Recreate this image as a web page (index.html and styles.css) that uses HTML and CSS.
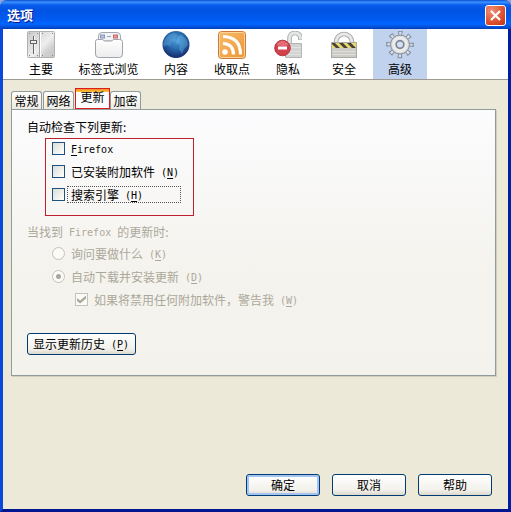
FILE: index.html
```
<!DOCTYPE html>
<html lang="zh-CN">

<head>
	<meta charset="utf-8">
	<title>选项</title>
	<link rel="stylesheet" href="styles.css">
</head>

<body>
	<div class="window">
		<header class="titlebar">
			<h1>选项</h1>
			<button class="close" type="button" aria-label="关闭">
				<svg width="13" height="13" viewBox="0 0 13 13"><path d="M2 2l9 9M11 2l-9 9" stroke="#fff" stroke-width="2.2" fill="none"/></svg>
			</button>
		</header>

		<nav class="toolbar">
			<button class="tool" type="button">
				<svg viewBox="0 0 28 28">
					<defs><linearGradient id="metal" x1="0" y1="0" x2="1" y2="1"><stop offset="0" stop-color="#c8c8c8"/><stop offset=".55" stop-color="#eeeeee"/><stop offset=".75" stop-color="#d0d0d0"/><stop offset="1" stop-color="#c4c4c4"/></linearGradient></defs>
					<rect x=".5" y=".5" width="27" height="26" rx="1" fill="url(#metal)" stroke="#b2b2b2"/>
					<path d="M12.5 1v25" stroke="#a5a5a5"/><path d="M13.5 1v25" stroke="#fff"/>
					<path d="M6.500 5v18" stroke="#666"/><path d="M7.500 5v18" stroke="#f4f4f4"/>
					<rect x="3.500" y="9.500" width="6" height="3" fill="#eee" stroke="#666"/>
					<path d="M2 2.500h1M10 2.500h1M2 24.500h1M10 24.500h1M15 2.500h1M25 2.500h1M15 24.500h1M25 24.500h1" stroke="#888"/>
				</svg>
				<span>主要</span>
			</button>
			<button class="tool tool-wide" type="button">
				<svg viewBox="0 0 28 28">
					<defs><linearGradient id="paper" x1="0" y1="0" x2="0" y2="1"><stop offset="0" stop-color="#fff"/><stop offset="1" stop-color="#ececee"/></linearGradient></defs>
					<path d="M3.500 10V5q0-3.500 3.500-3.500h15q3.500 0 3.500 3.500v5z" fill="#f1f3f6" stroke="#a3a8b0"/>
					<path d="M5 5.500h5" stroke="#8797b5" stroke-width="4"/><path d="M6 5.500h3" stroke="#b5c4de" stroke-width="2"/>
					<path d="M12 5.500h4" stroke="#a0a7b3"/>
					<path d="M18 5.500h5" stroke="#c9696b" stroke-width="4"/><path d="M19 5.500h3" stroke="#e59a9a" stroke-width="2"/>
					<path d="M.500 10.500q0-2 2-2h5l2 1.500h7l2-1.500h6q3 0 3 2V23q0 3.500-3 3.500H3.500Q.5 26.500.5 23z" fill="url(#paper)" stroke="#a0a4ac"/>
				</svg>
				<span>标签式浏览</span>
			</button>
			<button class="tool" type="button">
				<svg viewBox="0 0 28 28">
					<defs><radialGradient id="sea" cx=".5" cy=".35" r=".65"><stop offset="0" stop-color="#4b9cda"/><stop offset=".5" stop-color="#2869ae"/><stop offset="1" stop-color="#142a68"/></radialGradient></defs>
					<circle cx="14" cy="13.500" r="13.500" fill="url(#sea)"/>
					<path d="M3 8Q7 2 12 2l4 2-3 3 1 3-4 1-2 4-3-1-3 2-1-3z" fill="#62a8dc" opacity=".45"/>
					<path d="M16 5l4-1 5 5 1 5-4 4-2 5-3-5 1-4-4-2 1-4z" fill="#79c6ee" opacity=".35"/>
				</svg>
				<span>内容</span>
			</button>
			<button class="tool" type="button">
				<svg viewBox="0 0 28 28">
					<defs><linearGradient id="feed" x1="0" y1="0" x2="1" y2="1"><stop offset="0" stop-color="#f9bd69"/><stop offset="1" stop-color="#ec9436"/></linearGradient></defs>
					<rect x=".5" y=".5" width="27" height="27" rx="3" fill="url(#feed)" stroke="#cb7a3c"/>
					<rect x="1.500" y="1.500" width="25" height="25" rx="2" fill="none" stroke="#fbd49a"/>
					<circle cx="7" cy="21" r="2.800" fill="#fff"/>
					<path d="M5 12.500Q15.500 13 15.500 23.500M5 5.500Q22.500 6 22.500 23.500" fill="none" stroke="#fff" stroke-width="3.200"/>
				</svg>
				<span>收取点</span>
			</button>
			<button class="tool" type="button">
				<svg viewBox="0 0 28 28">
					<path d="M15.500 13V8q0-6 5.500-6t5.500 6v1" fill="none" stroke="#aaa" stroke-width="4.600"/>
					<path d="M15.500 13V8q0-6 5.500-6t5.500 6v.5" fill="none" stroke="#e4e6e6" stroke-width="2.800"/>
					<path d="M11.500 12.500H27.500v14H11.500z" fill="#d2d4d4" stroke="#b4b4b4"/>
					<path d="M12 16.500h15M12 20.500h15M12 23.500h15" stroke="#e2e4e4"/>
					<circle cx="8.500" cy="17" r="7.800" fill="#d2404c" stroke="#b23842"/>
					<path d="M2.500 14q2-4 6-4t6 4q-5 2-12 0z" fill="#ef8c92" opacity=".6"/>
					<path d="M4 17h9" stroke="#fff" stroke-width="3"/>
				</svg>
				<span>隐私</span>
			</button>
			<button class="tool" type="button">
				<svg viewBox="0 0 28 28">
					<path d="M6 13V11a8 8 0 0 1 16 0v2" fill="none" stroke="#a0a0a0" stroke-width="4.600"/>
					<path d="M6 13V11a8 8 0 0 1 16 0v2" fill="none" stroke="#e8e8e8" stroke-width="2.800"/>
					<rect x="1.500" y="11.500" width="25" height="15" fill="#cdccc6" stroke="#aaa9a3"/>
					<path d="M2 12h24v5H2z" fill="#ead96f"/>
					<path d="M2 12h3l5 5H6l-4-4zM9 12h4l5 5h-4zM17 12h4l5 5h-4z" fill="#45433a"/>
					<path d="M3 20.500h22M3 23.500h22" stroke="#dfded8"/>
				</svg>
				<span>安全</span>
			</button>
			<button class="tool active" type="button">
				<svg viewBox="0 0 28 28">
					<circle cx="14" cy="13.500" r="11.500" fill="none" stroke="#7e8895" stroke-width="4.500" stroke-dasharray="4.200 4.832" stroke-dashoffset="2.100"/>
					<circle cx="14" cy="13.500" r="11" fill="none" stroke="#d9dde0" stroke-width="3.600" stroke-dasharray="2.400 6.240" stroke-dashoffset="1.200"/>
					<circle cx="14" cy="13.500" r="9.500" fill="#d6d9db" stroke="#848d98"/>
					<circle cx="14" cy="13.500" r="6.500" fill="none" stroke="#e9ebec" stroke-width="3"/>
					<circle cx="14" cy="13.500" r="3.800" fill="#d3dff2" stroke="#76818e" stroke-width="1.500"/>
				</svg>
				<span>高级</span>
			</button>
		</nav>

		<main class="content">
			<div class="tabs" role="tablist">
				<button class="tab" type="button" role="tab">常规</button>
				<button class="tab" type="button" role="tab">网络</button>
				<button class="tab selected" type="button" role="tab" aria-selected="true">更新</button>
				<button class="tab" type="button" role="tab">加密</button>
			</div>

			<section class="panel">
				<p class="heading">自动检查下列更新:</p>
				<div class="checks">
					<label class="row"><input type="checkbox"><span class="text"><span class="latin"><u>F</u>irefox</span></span></label>
					<label class="row"><input type="checkbox"><span class="text">已安装附加软件<span class="latin"> (<u>N</u>)</span></span></label>
					<label class="row"><input type="checkbox"><span class="text focused">搜索引擎<span class="latin"> (<u>H</u>)</span></span></label>
				</div>

				<div class="disabled">
					<p class="heading">当找到<span class="latin"> Firefox </span>的更新时:</p>
					<div class="choices">
						<label class="row"><input type="radio" name="found" disabled><span class="text">询问要做什么<span class="latin"> (<u>K</u>)</span></span></label>
						<label class="row"><input type="radio" name="found" checked disabled><span class="text">自动下载并安装更新<span class="latin"> (<u>D</u>)</span></span></label>
						<label class="row sub"><input type="checkbox" checked disabled><span class="text">如果将禁用任何附加软件，警告我<span class="latin"> (<u>W</u>)</span></span></label>
					</div>
				</div>

				<button class="btn history" type="button">显示更新历史<span class="latin"> (<u>P</u>)</span></button>
			</section>
		</main>

		<footer class="buttons">
			<button class="btn default" type="button">确定</button>
			<button class="btn" type="button">取消</button>
			<button class="btn" type="button">帮助</button>
		</footer>
	</div>
</body>

</html>
```
FILE: styles.css
```
* {
	box-sizing: border-box;
}

body {
	margin: 0;
	background: #8aa5dc;
	font-family: "Noto Sans CJK SC", sans-serif;
	font-size: 12px;
	line-height: 16px;
	color: #000;
}

button {
	font: inherit;
	color: inherit;
	padding: 0;
	border: none;
	background: none;
}

h1,
p {
	margin: 0;
}

u {
	text-underline-offset: 2px;
}

.latin {
	font-family: "DejaVu Sans Mono", monospace;
	font-size: 10px;
	line-height: 1;
	white-space: pre;
	vertical-align: 1px;
}

.window {
	display: flex;
	flex-direction: column;
	min-height: 100vh;
	background: #ece9d8;
	border: 3px solid #0a38c8;
	border-color: #0a38c8 #001ea0 #001590 #0a48dc;
	border-top: none;
	border-radius: 7px 7px 0 0;
}

/* title bar */

.titlebar {
	display: flex;
	align-items: center;
	justify-content: space-between;
	height: 29px;
	margin: 0 -3px;
	padding: 1px 5px 0 7px;
	border-radius: 7px 7px 0 0;
	background: linear-gradient(#0a4ad0 0, #3a94ff 2px, #0a5cec 5px, #0054e3 10px, #0058ee 18px, #0066ff 24px, #0050d8 27px, #003cb8 29px);
}

.titlebar h1 {
	font-size: 13px;
	line-height: 20px;
	color: #fff;
	text-shadow: 1px 1px #0a1883;
}

.close {
	display: flex;
	align-items: center;
	justify-content: center;
	width: 21px;
	height: 21px;
	border: 1px solid #fff;
	border-radius: 3px;
	background: radial-gradient(circle at 30% 25%, #ee9075, #dc5030 60%, #bd3412);
}

/* toolbar */

.toolbar {
	display: flex;
	gap: 2px;
	height: 51px;
	padding: 0 11px;
	background: #fff;
	border-bottom: 1px solid #9d9b91;
}

.tool {
	display: flex;
	flex-direction: column;
	align-items: center;
	gap: 2px;
	width: 54px;
	padding-top: 2px;
}

.tool svg {
	width: 28px;
	height: 28px;
}

.tool-wide {
	width: 77px;
}

.tool.active {
	background: #c1d2ee;
}

/* tabs */

.content {
	padding: 8px 12px 0 8px;
}

.tabs {
	display: flex;
	align-items: flex-end;
}

.tab {
	width: 31px;
	height: 18px;
	margin-right: 1px;
	border: 1px solid #919b9c;
	border-bottom: none;
	border-radius: 3px 3px 0 0;
	background: linear-gradient(#fff, #ecebe4);
}

.tab.selected {
	width: 35px;
	height: 21px;
	margin: 0;
	padding-bottom: 3px;
	border: 1px solid #e01b1b;
	border-radius: 0;
	background: linear-gradient(#f08a24 0, #ffc73c 3px, #fcfcfe 3px);
}

.panel {
	padding: 9px 15px 20px;
	border: 1px solid #919b9c;
	box-shadow: 1px 1px #d0cebf;
	background: linear-gradient(#fcfcfe, #f4f3ee 60%, #f3f2ed);
}

/* options */

.checks {
	display: flex;
	flex-direction: column;
	gap: 4px;
	width: 149px;
	margin: 3px 0 8px 18px;
	padding: 0 6px 11px;
	border: 1px solid #c0202c;
}

.choices {
	display: flex;
	flex-direction: column;
	gap: 4px;
	margin: 4px 0 24px 25px;
}

.row {
	display: flex;
	align-items: center;
	gap: 2px;
	height: 19px;
}

.row.sub {
	padding-left: 23px;
}

.text {
	padding: 0 3px;
	border: 1px dotted transparent;
	line-height: 15px;
	white-space: nowrap;
}

.focused {
	flex: 1;
	margin-right: 6px;
	border-color: #555;
}

input {
	appearance: none;
	flex: none;
	width: 13px;
	height: 13px;
	margin: 0;
	border: 1px solid #1c5180;
	background: linear-gradient(135deg, #dcdcd7, #fff);
}

input[type="radio"] {
	border-radius: 50%;
}

input:disabled {
	border-color: #c5c3b6;
	background: #fafaf7;
}

input[type="radio"]:checked {
	background: radial-gradient(circle, #aaa898 2px, #fafaf7 3px);
}

input[type="checkbox"]:checked {
	display: grid;
	place-items: center;
}

input[type="checkbox"]:checked::before {
	content: "";
	width: 9px;
	height: 8px;
	background: #aaa898;
	clip-path: polygon(0 30%, 35% 62%, 100% 0, 100% 38%, 35% 100%, 0 68%);
}

.disabled {
	color: #aca899;
}

/* buttons */

.btn {
	width: 74px;
	height: 22px;
	border: 1px solid #003c74;
	border-radius: 3px;
	background: linear-gradient(#fff, #f2f1eb 75%, #dcd8cc);
}

.history {
	width: 109px;
	text-align: left;
	padding-left: 5px;
}

.default {
	box-shadow: inset 0 0 0 2px #a5c3f3;
}

.buttons {
	display: flex;
	justify-content: flex-end;
	gap: 12px;
	margin-top: auto;
	padding: 0 16px 13px;
}
```
